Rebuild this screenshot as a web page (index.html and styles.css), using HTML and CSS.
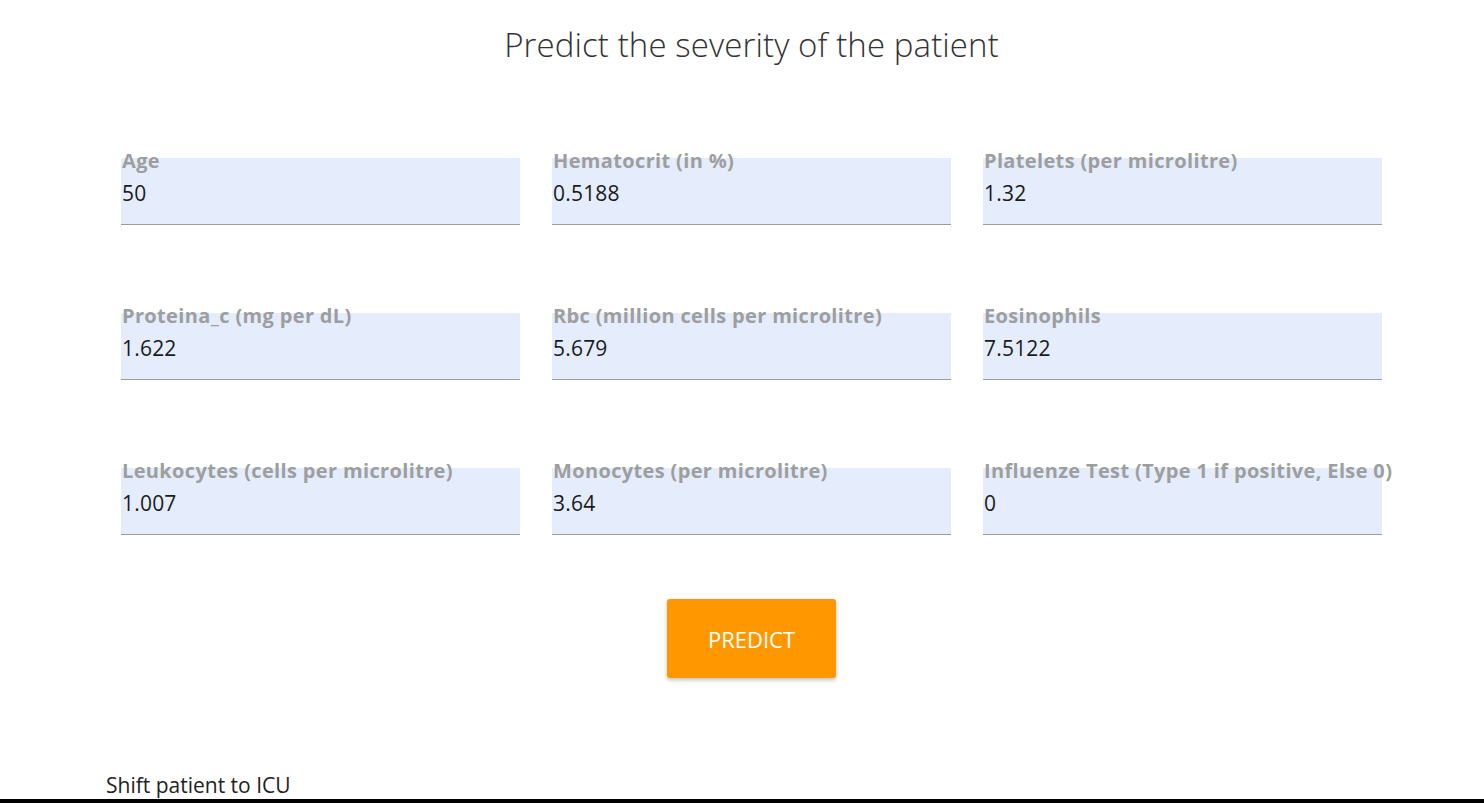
FILE: index.html
```html
<!DOCTYPE html>
<html>
<head>
<meta charset="utf-8">
<title>Predict severity</title>
<link rel="stylesheet" href="styles.css">
</head>
<body>
<div class="page">
  <h1 class="title">Predict the severity of the patient</h1>
  <form class="grid">
    <div class="field"><label class="label">Age</label><input class="value" value="50"></div>
    <div class="field"><label class="label">Hematocrit (in %)</label><input class="value" value="0.5188"></div>
    <div class="field"><label class="label">Platelets (per microlitre)</label><input class="value" value="1.32"></div>
    <div class="field"><label class="label">Proteina_c (mg per dL)</label><input class="value" value="1.622"></div>
    <div class="field"><label class="label">Rbc (million cells per microlitre)</label><input class="value" value="5.679"></div>
    <div class="field"><label class="label">Eosinophils</label><input class="value" value="7.5122"></div>
    <div class="field"><label class="label">Leukocytes (cells per microlitre)</label><input class="value" value="1.007"></div>
    <div class="field"><label class="label">Monocytes (per microlitre)</label><input class="value" value="3.64"></div>
    <div class="field"><label class="label label-wide">Influenze Test (Type 1 if positive, Else 0)</label><input class="value" value="0"></div>
  </form>
  <div class="actions"><button class="btn" type="button">PREDICT</button></div>
</div>
<p class="result">Shift patient to ICU</p>
<div class="bottom-bar"></div>
</body>
</html>
```
FILE: styles.css
```css
html, body {
  margin: 0;
  padding: 0;
  background: #fff;
}
body {
  font-family: "Open Sans", "Noto Sans", "Liberation Sans", sans-serif;
  color: #222;
  overflow: hidden;
}
.page {
  padding-left: 19px;
  display: flex;
  flex-direction: column;
  align-items: center;
}
.title {
  margin: 0;
  padding-top: 22px;
  font-size: 33px;
  line-height: 45px;
  font-weight: 300;
  color: #333;
  text-align: center;
  letter-spacing: 0.1px;
}
.grid {
  margin-top: 91px;
  display: grid;
  grid-template-columns: repeat(3, 399px);
  column-gap: 32px;
  row-gap: 88px;
}
.field {
  height: 66px;
  background: #e5edfc;
  border-bottom: 1px solid #9c9c9c;
  display: flex;
  flex-direction: column;
}
.label {
  margin-top: -9px;
  padding-left: 1px;
  font-size: 20px;
  line-height: 24px;
  font-weight: 700;
  color: #9e9e9e;
  white-space: nowrap;
  letter-spacing: 0.35px;
}
.value {
  margin-top: 6px;
  padding: 0 0 0 1px;
  border: none;
  outline: none;
  background: transparent;
  font-family: inherit;
  font-size: 21px;
  line-height: 28px;
  height: 28px;
  color: #1a1a1a;
  letter-spacing: 0.2px;
}
.actions {
  margin-top: 64px;
}
.btn {
  width: 169px;
  height: 79px;
  border: none;
  border-radius: 3px;
  background: #ff9800;
  color: #fff;
  font-family: inherit;
  font-size: 22px;
  box-shadow: 0 2px 4px rgba(0, 0, 0, 0.25);
  cursor: pointer;
}
.result {
  margin: 93px 0 0 0;
  padding-left: 106px;
  font-size: 21px;
  line-height: 28px;
  color: #222;
}
.bottom-bar {
  height: 4px;
  background: #000;
}
```
